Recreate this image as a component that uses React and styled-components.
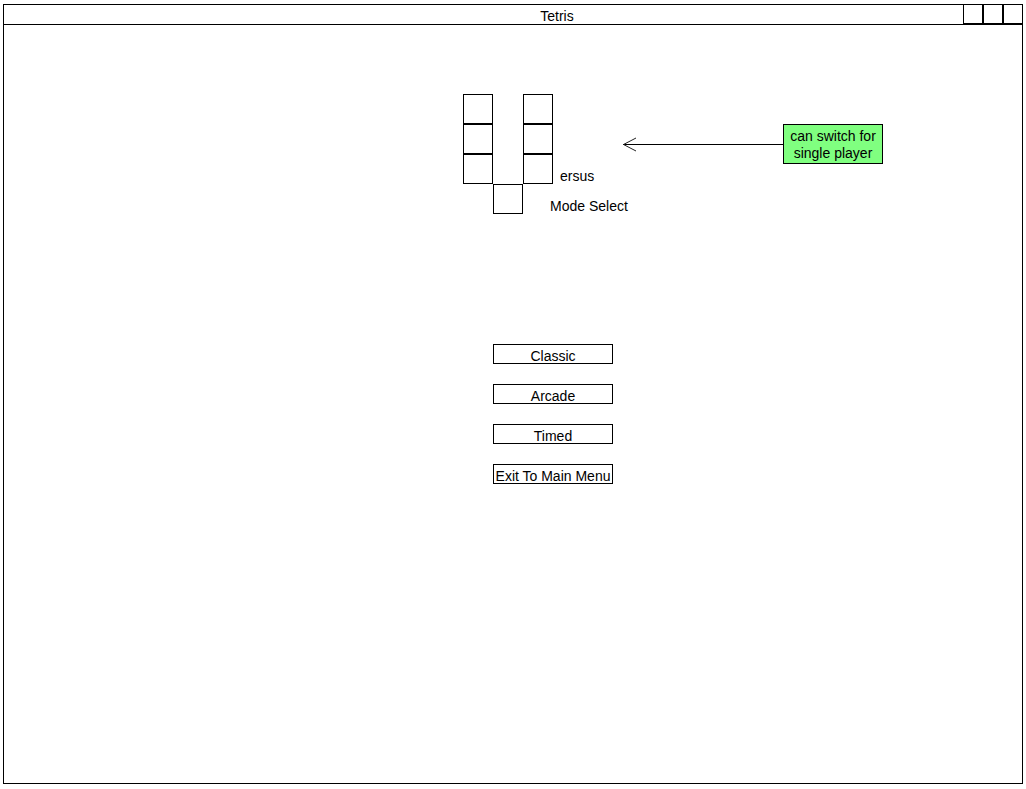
import React from "react";
import styled, { createGlobalStyle } from "styled-components";

const GlobalStyle = createGlobalStyle`
  *, *::before, *::after { box-sizing: border-box; }
  body {
    margin: 0;
    background: #fff;
    color: #000;
    font: 14px/16px "Liberation Sans", Arial, sans-serif;
  }
  button { font: inherit; color: inherit; }
`;

const Page = styled.div`
  display: flex;
  min-height: 100vh;
  padding: 4px 3px 5px;
`;

const Window = styled.div`
  flex: 1;
  border: 1px solid #000;
`;

const TitleBar = styled.header`
  display: grid;
  grid-template-columns: 88px 1fr;
  height: 20px;
  border-bottom: 1px solid #000;
`;

const Title = styled.span`
  grid-area: 1 / 1 / 2 / 3;
  padding: 3px 0 0 88px;
  text-align: center;
`;

const WindowControls = styled.div`
  grid-area: 1 / 2 / 2 / 3;
  justify-self: end;
  display: flex;
  margin: -1px -1px 0 0;
`;

const WindowButton = styled.button`
  width: 20px;
  height: 20px;
  padding: 0;
  border: 1px solid #000;
  background: #fff;
`;

const Stage = styled.main`
  display: grid;
  grid-template-columns: 459fr 420px 139fr;
  row-gap: 130px;
  padding: 69px 0;
`;

const Hero = styled.section`
  grid-column: 2;
  display: grid;
  grid-template-columns: 160px 1fr;
`;

const Logo = styled.h1`
  display: grid;
  grid-template: repeat(4, 30px) / repeat(3, 30px) 1fr;
  margin: 0;
  font: inherit;
`;

const Block = styled.span`
  grid-row: ${(p) => p.$row};
  grid-column: ${(p) => p.$col};
  border: 1px solid #000;
`;

const LogoText = styled.span`
  grid-row: ${(p) => p.$row};
  grid-column: ${(p) => p.$col} / -1;
  align-self: end;
  padding-left: ${(p) => p.$indent}px;
  white-space: nowrap;
`;

const Annotation = styled.aside`
  display: flex;
  align-items: center;
  align-self: start;
  padding-top: 30px;
`;

const Arrow = styled.svg`
  flex: none;
  width: 160px;
  height: 16px;
`;

const Note = styled.p`
  flex: 1;
  height: 40px;
  margin: 0;
  padding-top: 3px;
  border: 1px solid #000;
  background: #80ff80;
  line-height: 17px;
  text-align: center;
`;

const Menu = styled.nav`
  grid-column: 2;
  display: flex;
  flex-direction: column;
  gap: 20px;
  padding-left: 30px;
`;

const MenuButton = styled.button`
  display: flex;
  justify-content: center;
  width: 120px;
  height: 20px;
  padding: 3px 0 0;
  border: 1px solid #000;
  background: #fff;
  white-space: nowrap;
`;

const blocks = [
  [1, 1], [2, 1], [3, 1],
  [4, 2],
  [1, 3], [2, 3], [3, 3],
];

const modes = ["Classic", "Arcade", "Timed", "Exit To Main Menu"];

export default function App() {
  return (
    <Page>
      <GlobalStyle />
      <Window>
        <TitleBar>
          <Title>Tetris</Title>
          <WindowControls>
            {["Minimize", "Maximize", "Close"].map((name) => (
              <WindowButton key={name} type="button" aria-label={name} />
            ))}
          </WindowControls>
        </TitleBar>
        <Stage>
          <Hero>
            <Logo>
              {blocks.map(([row, col]) => (
                <Block key={`${row}-${col}`} $row={row} $col={col} />
              ))}
              <LogoText $row={3} $col={4} $indent={7}>ersus</LogoText>
              <LogoText $row={4} $col={3} $indent={27}>Mode Select</LogoText>
            </Logo>
            <Annotation>
              <Arrow viewBox="0 0 160 16" fill="none" aria-hidden="true">
                <path d="M0 8.5H160" stroke="#000" />
                <path d="M13 2L0.5 8.5L13 15" stroke="#222" />
              </Arrow>
              <Note>can switch for single player</Note>
            </Annotation>
          </Hero>
          <Menu aria-label="Mode Select">
            {modes.map((mode) => (
              <MenuButton key={mode} type="button">{mode}</MenuButton>
            ))}
          </Menu>
        </Stage>
      </Window>
    </Page>
  );
}
